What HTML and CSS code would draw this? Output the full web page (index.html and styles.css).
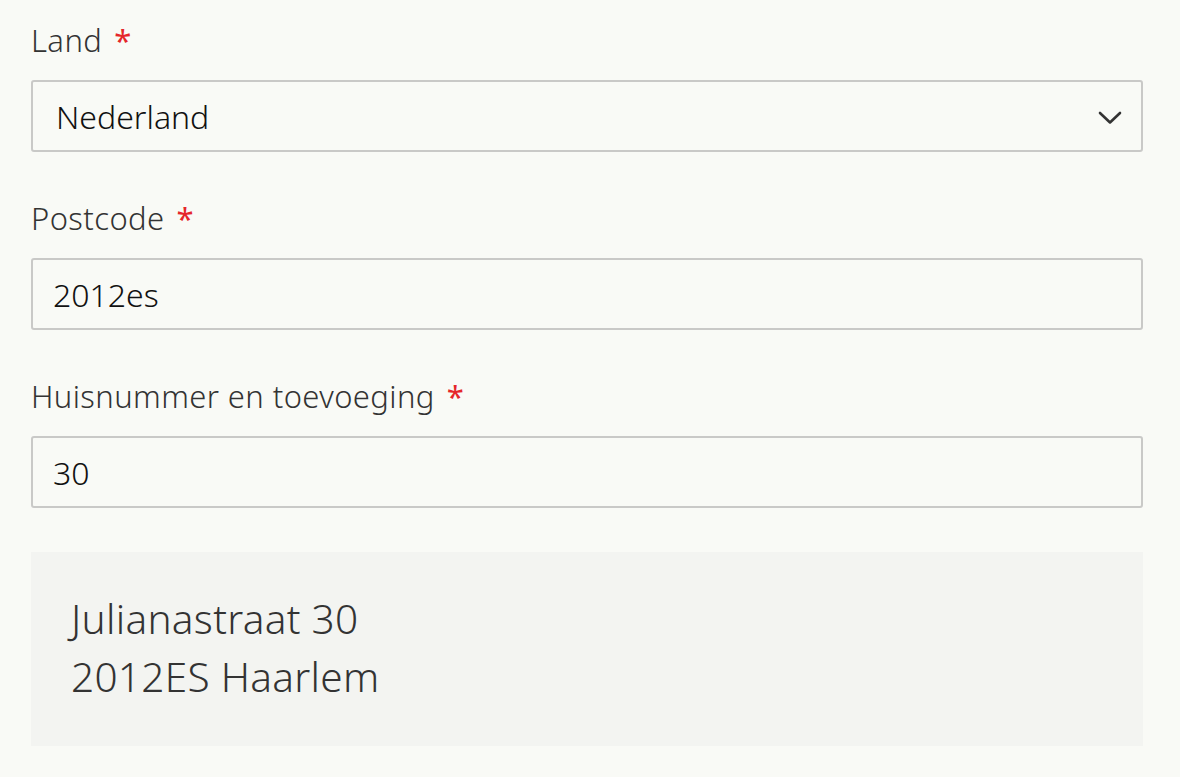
FILE: index.html
```html
<!DOCTYPE html>
<html lang="nl">
<head>
<meta charset="utf-8">
<title>Adres</title>
<link rel="stylesheet" href="styles.css">
</head>
<body>
<form class="address-form">
  <div class="field">
    <label class="label" for="land">Land<span class="req">*</span></label>
    <div class="select-wrap">
      <select id="land" class="control select">
        <option>Nederland</option>
        <option>België</option>
      </select>
      <svg class="chevron" width="24" height="14" viewBox="0 0 24 14" aria-hidden="true">
        <path d="M2 2 L12 11.5 L22 2" fill="none" stroke="#333" stroke-width="2.6" stroke-linecap="round" stroke-linejoin="round"/>
      </svg>
    </div>
  </div>
  <div class="field">
    <label class="label" for="postcode">Postcode<span class="req">*</span></label>
    <input id="postcode" class="control" type="text" value="2012es">
  </div>
  <div class="field">
    <label class="label" for="huisnummer">Huisnummer en toevoeging<span class="req">*</span></label>
    <input id="huisnummer" class="control" type="text" value="30">
  </div>
  <div class="result">
    <p class="result-line">Julianastraat 30</p>
    <p class="result-line">2012ES Haarlem</p>
  </div>
</form>
</body>
</html>
```
FILE: styles.css
```css
html, body {
  margin: 0;
  padding: 0;
  background: #f9faf6;
}
body {
  font-family: "Noto Sans", "Open Sans", sans-serif;
  color: #333;
}
.address-form {
  width: 1112px;
  padding: 18px 0 0 31px;
  display: flex;
  flex-direction: column;
}
.field {
  display: flex;
  flex-direction: column;
  margin-bottom: 44px;
}
.label {
  font-size: 31px;
  font-weight: 350;
  letter-spacing: 0.4px;
  line-height: 45px;
  color: #333;
  margin-bottom: 17px;
}
.req {
  color: #e5262a;
  font-weight: 400;
  margin-left: 12px;
}
.select-wrap {
  position: relative;
}
.control {
  box-sizing: border-box;
  width: 100%;
  height: 72px;
  margin: 0;
  border: 2px solid #c9c9c7;
  border-radius: 3px;
  background: #f9faf6;
  font-family: "Noto Sans", "Open Sans", sans-serif;
  font-size: 32px;
  font-weight: 350;
  color: #111;
  padding: 0 20px;
  outline: none;
}
.select {
  appearance: none;
  -webkit-appearance: none;
  padding-left: 23px;
}
.chevron {
  position: absolute;
  right: 21px;
  top: 31px;
  pointer-events: none;
}
.result {
  background: #f3f4f1;
  padding: 38px 40px 40px;
}
.result-line {
  margin: 0;
  font-size: 40.5px;
  font-weight: 350;
  letter-spacing: 0.3px;
  line-height: 58px;
  color: #333;
}
```
